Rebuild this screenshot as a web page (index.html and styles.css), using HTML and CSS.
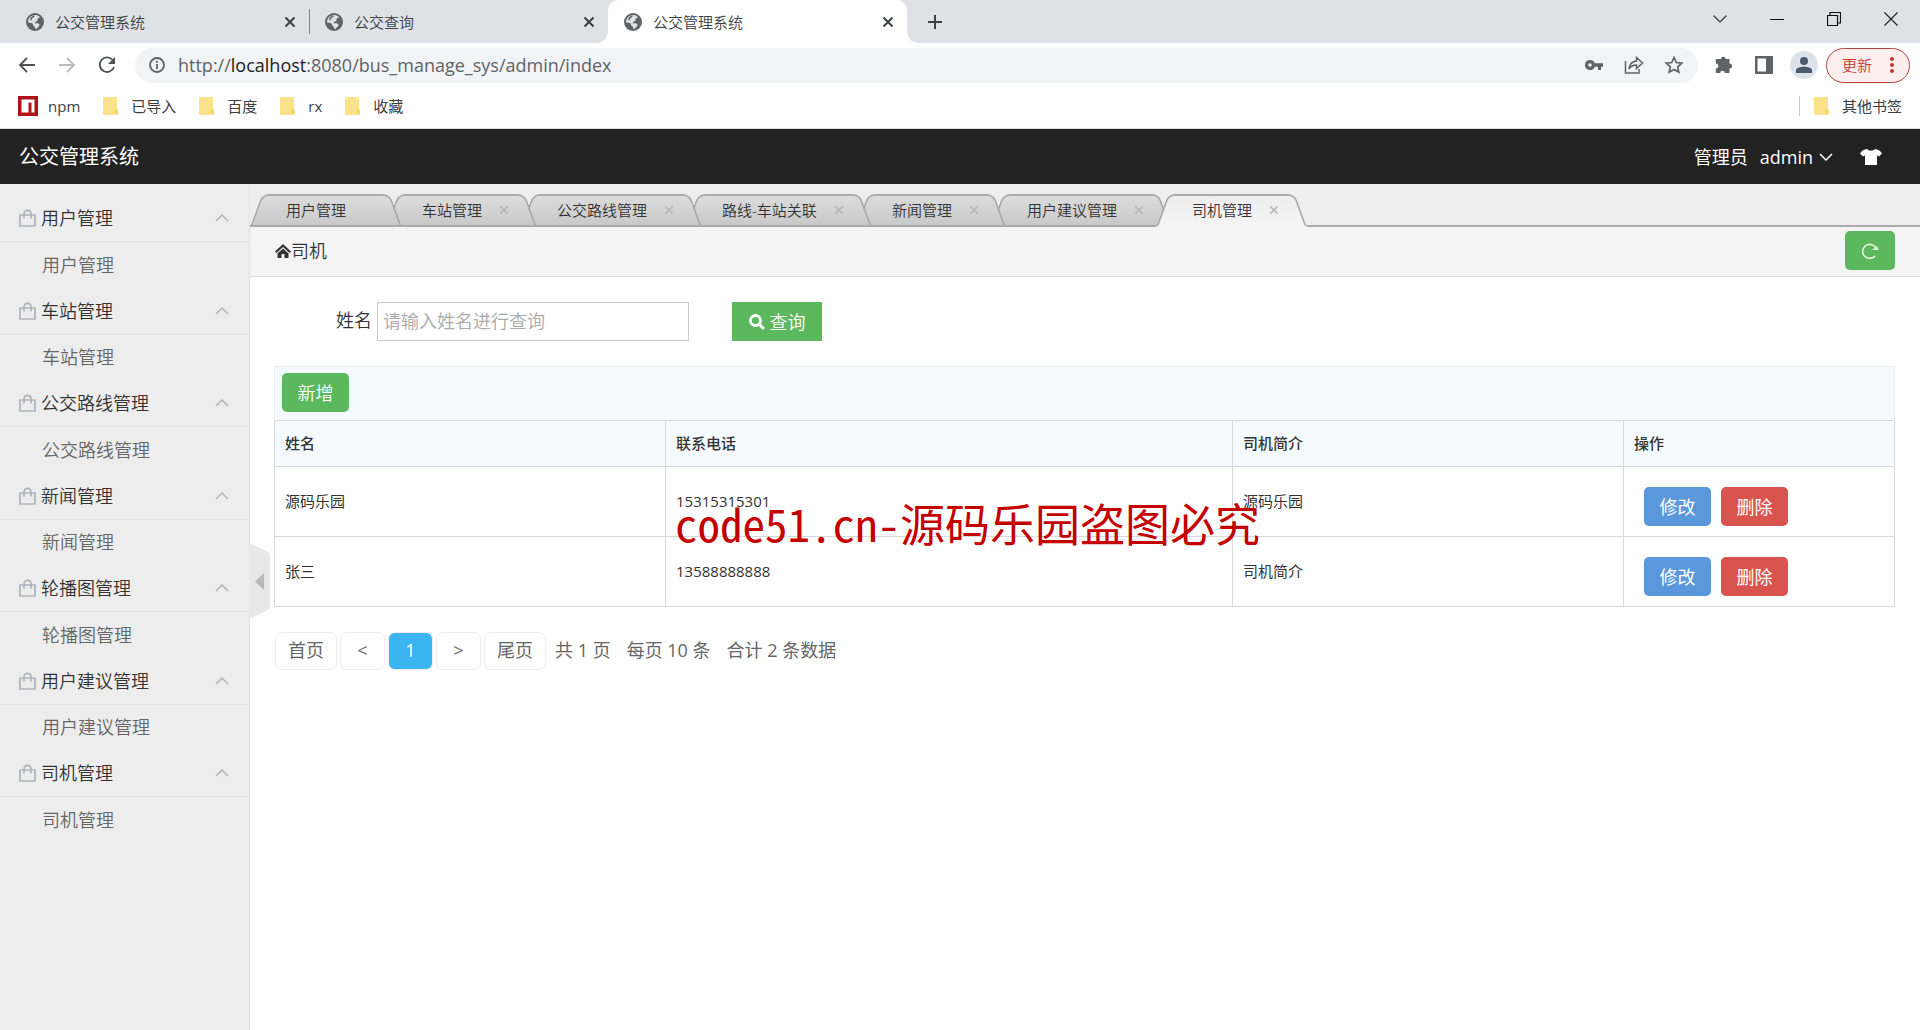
FILE: index.html
```html
<!DOCTYPE html>
<html lang="zh-CN">
<head>
<meta charset="utf-8">
<meta name="viewport" content="width=device-width, initial-scale=1">
<title>公交管理系统</title>
<link rel="stylesheet" href="styles.css">
</head>
<body>
<svg class="defs" aria-hidden="true">
  <symbol id="globe" viewBox="0 0 20 20"><circle cx="10" cy="10" r="9" fill="#5f6368"/><path d="M10.500 3c2 .2 3.500 1 4.500 2.300-.8.900-1.800.7-2.300 1.400-.4 1 .2 2-1 2.600-1 .4-1.600.2-1.900 1.200-.2.700.7.900 1.500.8 1.500-.2 3 .3 3.200 1.700.1 1.500-1.400 1.600-1.900 2.600-.3.700-.5 1.200-1.600 1.400-1.200-.1-.9-1.800-1.500-2.500-.7-.8-1.600-.9-1.600-2 0-.8-.5-1.200-1.300-1.400L3 10.400C2.900 6.500 6 3 10.500 3z" fill="#dfe2e7"/><path d="M9 3.500c-.3 1.500-1.700 1.500-2.400 2.400-.6.800-.2 1.700-1.100 2.300" fill="none" stroke="#5f6368" stroke-width="1.600"/></symbol>
  <symbol id="cross" viewBox="0 0 12 12"><path d="M1.500 1.500l9 9M10.500 1.500l-9 9" fill="none" stroke="currentColor" stroke-width="2"/></symbol>
  <symbol id="folder" viewBox="0 0 16 20"><path d="M1 1h14v13l1 1v4H1z" fill="#fbe38b"/><path d="M13 13.500h2v3.500h-2z" fill="#fbe38b" stroke="#efc94c" stroke-width=".8"/></symbol>
  <symbol id="bag" viewBox="0 0 17 18"><path d="M1 6h15v11H1zM5 9.500V5.500C5 0 12 0 12 5.500v4" fill="none" stroke="#aeb2b9" stroke-width="1.700"/></symbol>
  <symbol id="chevron-up" viewBox="0 0 14 8"><path d="M1 7l6-6 6 6" fill="none" stroke="#b4b4b4" stroke-width="1.500"/></symbol>
  <symbol id="chevron-down" viewBox="0 0 14 8"><path d="M1 1l6 6 6-6" fill="none" stroke="currentColor" stroke-width="1.500"/></symbol>
</svg>

<header class="browser">
  <div class="tab-strip">
    <div class="browser-tab">
      <svg class="favicon"><use href="#globe"/></svg><span>公交管理系统</span>
      <button class="tab-close" aria-label="关闭"><svg><use href="#cross"/></svg></button>
    </div>
    <div class="browser-tab divided">
      <svg class="favicon"><use href="#globe"/></svg><span>公交查询</span>
      <button class="tab-close" aria-label="关闭"><svg><use href="#cross"/></svg></button>
    </div>
    <div class="browser-tab current">
      <svg class="favicon"><use href="#globe"/></svg><span>公交管理系统</span>
      <button class="tab-close" aria-label="关闭"><svg><use href="#cross"/></svg></button>
    </div>
    <button class="new-tab" aria-label="新标签页"><svg width="16" height="16" viewBox="0 0 16 16"><path d="M8 1v14M1 8h14" stroke="#3c4043" stroke-width="2"/></svg></button>
    <div class="window-controls">
      <button aria-label="搜索标签页"><svg width="14" height="8" viewBox="0 0 14 8"><path d="M.5.5L7 7 13.500.5" fill="none" stroke="#333" stroke-width="1.200"/></svg></button>
      <button aria-label="最小化"><svg width="14" height="14" viewBox="0 0 14 14"><path d="M0 7.500h14" stroke="#111"/></svg></button>
      <button aria-label="还原"><svg width="14" height="14" viewBox="0 0 14 14"><path d="M.5 3.500h10v10H.5zM3 3V.5h10.500V11H11" fill="none" stroke="#111" stroke-width="1.200"/></svg></button>
      <button aria-label="关闭窗口"><svg width="14" height="14" viewBox="0 0 14 14"><path d="M.5.5l13 13M13.500.5l-13 13" stroke="#222" stroke-width="1.200"/></svg></button>
    </div>
  </div>

  <div class="toolbar">
    <button class="nav-button" aria-label="后退"><svg width="18" height="18" viewBox="0 0 18 18"><path d="M17 9H2M9 2L2 9l7 7" fill="none" stroke="#4e5256" stroke-width="1.800"/></svg></button>
    <button class="nav-button" aria-label="前进"><svg width="18" height="18" viewBox="0 0 18 18"><path d="M1 9h15M9 2l7 7-7 7" fill="none" stroke="#b9bbbe" stroke-width="1.800"/></svg></button>
    <button class="nav-button" aria-label="重新加载"><svg width="18" height="18" viewBox="0 0 18 18"><path d="M14.700 4A7.300 7.300 0 1 0 16 11" fill="none" stroke="#4e5256" stroke-width="1.800"/><path d="M17 1v7h-7z" fill="#4e5256"/></svg></button>
    <div class="omnibox">
      <svg width="18" height="18" viewBox="0 0 18 18"><circle cx="9" cy="9" r="7" fill="none" stroke="#5f6368" stroke-width="1.800"/><path d="M9 8v5M9 4.800v1.900" stroke="#5f6368" stroke-width="1.800"/></svg>
      <div class="url" role="textbox" contenteditable="true" spellcheck="false" aria-label="地址栏">http://<b>localhost</b>:8080/bus_manage_sys/admin/index</div>
      <button class="omni-button" aria-label="密码"><svg width="18" height="12" viewBox="0 0 18 12"><path d="M5 1a5 5 0 1 0 4.700 6.700H13V11h3V7.700h2V4.300H9.700A5 5 0 0 0 5 1zm0 3.200a1.800 1.800 0 1 1 0 3.600 1.800 1.800 0 0 1 0-3.600z" fill="#5f6368"/></svg></button>
      <button class="omni-button" aria-label="分享"><svg width="20" height="18" viewBox="0 0 20 18"><path d="M1.500 5v12H15v-4M5 13c.5-5 3-7.500 7.500-8V1.500L18.500 7l-6 5.500V9C9 9 7 10 5 13z" fill="none" stroke="#5f6368" stroke-width="1.500"/></svg></button>
      <button class="omni-button" aria-label="添加书签"><svg width="20" height="20" viewBox="0 0 20 20"><path d="M10 2.500l2.300 5 5.500.6-4.100 3.700 1.100 5.400-4.800-2.700-4.800 2.700 1.100-5.400L2.200 8.100l5.500-.6z" fill="none" stroke="#5f6368" stroke-width="1.700"/></svg></button>
    </div>
    <button class="tool-button" aria-label="扩展程序"><svg width="20" height="20" viewBox="0 0 20 20"><path d="M7 4a2.300 2.300 0 0 1 4.600 0h3.900v4.500a2.500 2.500 0 0 1 0 5V18h-4.700a2.300 2.300 0 0 0-4.600 0H1.800v-4.400a2.500 2.500 0 0 0 0-5V4z" fill="#5f6368"/></svg></button>
    <button class="tool-button" aria-label="侧边栏"><svg width="18" height="18" viewBox="0 0 18 18"><path d="M0 0h18v18H0zM2.500 2.500v13H11v-13z" fill="#5f6368" fill-rule="evenodd"/></svg></button>
    <button class="avatar" aria-label="个人资料"><svg width="16" height="16" viewBox="0 0 16 16"><circle cx="8" cy="4" r="4" fill="#4c5a70"/><path d="M0 16v-2.500C0 8.500 16 8.500 16 13.500V16z" fill="#4c5a70"/></svg></button>
    <button class="update">更新<svg width="4" height="16" viewBox="0 0 4 16"><g fill="#c5352d"><circle cx="2" cy="2" r="2"/><circle cx="2" cy="8" r="2"/><circle cx="2" cy="14" r="2"/></g></svg></button>
  </div>

  <nav class="bookmarks" aria-label="书签">
    <a href="#" class="npm"><svg width="20" height="20" viewBox="0 0 20 20"><path d="M0 0h20v20H0z" fill="#b01217"/><path d="M3.500 3.500h13v13h-3v-10h-3v10h-7z" fill="#fff"/></svg>npm</a>
    <a href="#"><svg class="folder"><use href="#folder"/></svg>已导入</a>
    <a href="#"><svg class="folder"><use href="#folder"/></svg>百度</a>
    <a href="#"><svg class="folder"><use href="#folder"/></svg>rx</a>
    <a href="#"><svg class="folder"><use href="#folder"/></svg>收藏</a>
    <a href="#" class="other"><svg class="folder"><use href="#folder"/></svg>其他书签</a>
  </nav>
</header>

<div class="app-header">
  <h1>公交管理系统</h1>
  <button class="account"><span>管理员</span><span>admin</span><svg width="14" height="8"><use href="#chevron-down"/></svg></button>
  <button class="skin" aria-label="换肤"><svg width="22" height="16" viewBox="0 0 22 16"><path d="M7 0c1.500 2.200 6.500 2.200 8 0 3 .3 5 1.500 7 4.500L19 7.500 17 6.300V16H5V6.300L3 7.500 0 4.500C2 1.500 4 .3 7 0z" fill="#fff"/></svg></button>
</div>

<div class="workspace">
  <nav class="sidebar" aria-label="菜单">
    <ul>
      <li><button><svg class="bag"><use href="#bag"/></svg>用户管理<svg class="arrow"><use href="#chevron-up"/></svg></button><a href="#">用户管理</a></li>
      <li><button><svg class="bag"><use href="#bag"/></svg>车站管理<svg class="arrow"><use href="#chevron-up"/></svg></button><a href="#">车站管理</a></li>
      <li><button><svg class="bag"><use href="#bag"/></svg>公交路线管理<svg class="arrow"><use href="#chevron-up"/></svg></button><a href="#">公交路线管理</a></li>
      <li><button><svg class="bag"><use href="#bag"/></svg>新闻管理<svg class="arrow"><use href="#chevron-up"/></svg></button><a href="#">新闻管理</a></li>
      <li><button><svg class="bag"><use href="#bag"/></svg>轮播图管理<svg class="arrow"><use href="#chevron-up"/></svg></button><a href="#">轮播图管理</a></li>
      <li><button><svg class="bag"><use href="#bag"/></svg>用户建议管理<svg class="arrow"><use href="#chevron-up"/></svg></button><a href="#">用户建议管理</a></li>
      <li><button><svg class="bag"><use href="#bag"/></svg>司机管理<svg class="arrow"><use href="#chevron-up"/></svg></button><a href="#">司机管理</a></li>
    </ul>
    <button class="collapse" aria-label="收起菜单"><svg width="21" height="76" viewBox="0 0 21 76"><path d="M0 0l19 9q2 1 2 3v52q0 2-2 3L0 76z" fill="#e8e8e8"/><path d="M15 30v17l-9-8.500z" fill="#b9b9b9"/></svg></button>
  </nav>

  <main>
    <div class="page-tabs">
      <div class="page-tab"><a href="#">用户管理</a></div>
      <div class="page-tab"><a href="#">车站管理</a><button aria-label="关闭"><svg><use href="#cross"/></svg></button></div>
      <div class="page-tab"><a href="#">公交路线管理</a><button aria-label="关闭"><svg><use href="#cross"/></svg></button></div>
      <div class="page-tab"><a href="#">路线-车站关联</a><button aria-label="关闭"><svg><use href="#cross"/></svg></button></div>
      <div class="page-tab"><a href="#">新闻管理</a><button aria-label="关闭"><svg><use href="#cross"/></svg></button></div>
      <div class="page-tab"><a href="#">用户建议管理</a><button aria-label="关闭"><svg><use href="#cross"/></svg></button></div>
      <div class="page-tab active"><a href="#">司机管理</a><button aria-label="关闭"><svg><use href="#cross"/></svg></button></div>
    </div>

    <div class="breadcrumb">
      <svg width="16" height="14" viewBox="0 0 16 14"><path d="M0 7.500L8 0l8 7.500-1.500 1.500L8 3 1.500 9z" fill="#333"/><path d="M2.500 9.500L8 4.500l5.500 5V14h-4v-4h-3v4h-4z" fill="#333"/></svg>
      <span>司机</span>
      <button class="refresh" aria-label="刷新"><svg width="18" height="18" viewBox="0 0 18 18"><path d="M14.500 5.500A7 7 0 1 0 14 14" fill="none" stroke="#e6f7e6" stroke-width="1.600"/><path d="M11 8h6.500l-1.500-4z" fill="#e6f7e6"/></svg></button>
    </div>

    <div class="content">
      <form class="search">
        <label for="driver-name">姓名</label>
        <input id="driver-name" type="text" placeholder="请输入姓名进行查询">
        <button type="button"><svg width="16" height="16" viewBox="0 0 16 16"><circle cx="6.500" cy="6.500" r="5" fill="none" stroke="#fff" stroke-width="2.800"/><path d="M10 10l5 5" stroke="#fff" stroke-width="3"/></svg>查询</button>
      </form>

      <section class="listing">
        <div class="actions"><button class="button green">新增</button></div>
        <table>
          <colgroup><col class="narrow"><col class="wide"><col class="narrow"><col></colgroup>
          <thead><tr><th>姓名</th><th>联系电话</th><th>司机简介</th><th>操作</th></tr></thead>
          <tbody>
            <tr><td>源码乐园</td><td>15315315301</td><td>源码乐园</td><td class="ops"><button class="button blue">修改</button><button class="button red">删除</button></td></tr>
            <tr><td>张三</td><td>13588888888</td><td>司机简介</td><td class="ops"><button class="button blue">修改</button><button class="button red">删除</button></td></tr>
          </tbody>
        </table>
        <p class="watermark">code51.cn-源码乐园盗图必究</p>
      </section>

      <nav class="pager" aria-label="分页">
        <a href="#">首页</a>
        <a href="#" class="step">&lt;</a>
        <a href="#" class="step here">1</a>
        <a href="#" class="step">&gt;</a>
        <a href="#">尾页</a>
        <span>共 1 页</span>
        <span>每页 10 条</span>
        <span>合计 2 条数据</span>
      </nav>
    </div>
  </main>
</div>
</body>
</html>
```
FILE: styles.css
```css
* { box-sizing: border-box; }

body {
  margin: 0;
  min-height: 100vh;
  display: flex;
  flex-direction: column;
  background: #fff;
  color: #333;
  font: 18px/24px "Open Sans", "Noto Sans CJK SC", sans-serif;
  font-weight: 350;
}

button, input { font: inherit; color: inherit; }
button { padding: 0; border: 0; background: none; }
a { color: inherit; text-decoration: none; }
svg { display: block; flex: none; }
.defs { position: absolute; width: 0; height: 0; }

/* Browser window */
.browser { font-size: 15px; border-bottom: 1px solid #ddd; }

.tab-strip { display: flex; height: 43px; background: #dee1e6; padding-left: 10px; }
.browser-tab {
  position: relative;
  width: 299px;
  display: flex;
  align-items: center;
  gap: 10px;
  padding: 0 11px 0 15px;
  color: #3c4043;
}
.browser-tab.divided { background: linear-gradient(#80858b, #80858b) 0 center / 1px 25px no-repeat; }
.browser-tab.current { background: #fff; border-radius: 10px 10px 0 0; }
.browser-tab.current::before, .browser-tab.current::after {
  content: "";
  position: absolute;
  bottom: 0;
  width: 10px;
  height: 10px;
}
.browser-tab.current::before { right: 100%; background: radial-gradient(circle at 0 0, transparent 9px, #fff 10px); }
.browser-tab.current::after { left: 100%; background: radial-gradient(circle at 100% 0, transparent 9px, #fff 10px); }
.favicon { width: 20px; height: 20px; }
.tab-close { width: 16px; height: 16px; margin-left: auto; display: grid; place-items: center; }
.tab-close svg { width: 12px; height: 12px; }
.new-tab { width: 56px; display: grid; place-items: center; }
.window-controls { display: flex; margin-left: auto; align-items: center; height: 37px; padding-right: 1px; }
.window-controls button { width: 57px; height: 37px; display: grid; place-items: center; color: #333; }

.toolbar { display: flex; align-items: center; height: 44px; padding: 0 10px 0 7px; }
.nav-button { width: 40px; height: 34px; display: grid; place-items: center; }
.omnibox {
  flex: 1;
  display: flex;
  align-items: center;
  height: 35px;
  margin-left: 8px;
  padding: 0 4px 0 13px;
  border-radius: 18px;
  background: #f1f3f4;
}
.url { flex: 1; margin-left: 12px; font-size: 18px; font-weight: 400; color: #5f6368; outline: 0; }
.url b { font-weight: 400; color: #202124; }
.omni-button { width: 40px; height: 34px; display: grid; place-items: center; }
.tool-button { width: 40px; height: 34px; display: grid; place-items: center; margin-left: 6px; }
.tool-button + .tool-button { margin-left: 0; }
.avatar { width: 28px; height: 28px; border-radius: 50%; background: #dce1ea; display: grid; place-items: center; margin: 0 8px 0 6px; }
.update {
  width: 84px;
  height: 35px;
  display: flex;
  align-items: center;
  justify-content: space-between;
  padding: 0 15px;
  border: 1px solid #b3453f;
  border-radius: 18px;
  background: #fceeed;
  color: #c5352d;
}

.bookmarks { display: flex; align-items: center; gap: 22px; height: 41px; padding: 0 18px 3px; color: #3c4043; font-weight: 400; }
.bookmarks a { display: flex; align-items: center; gap: 13px; }
.bookmarks .npm { gap: 10px; }
.folder { width: 16px; height: 20px; }
.bookmarks .other { margin-left: auto; padding-left: 14px; background: linear-gradient(#ccc, #ccc) 0 center / 1px 20px no-repeat; }

/* Application header */
.app-header { display: flex; align-items: center; height: 55px; padding: 0 38px 0 19px; background: #222; color: #fff; }
.app-header h1 { margin: 0 auto 0 0; font-size: 20px; font-weight: 400; }
.account { display: flex; align-items: center; gap: 12px; font-weight: 400; }
.account span + svg { margin-left: -6px; }
.skin { margin-left: 27px; }

.workspace { flex: 1; display: flex; }

/* Side menu */
.sidebar { position: relative; width: 250px; flex: none; padding-top: 11px; background: #ededed; border-right: 1px solid #e2e2e2; }
.sidebar ul { margin: 0; padding: 0; list-style: none; }
.sidebar li button {
  width: 100%;
  height: 47px;
  display: flex;
  align-items: center;
  gap: 5px;
  padding: 0 20px 0 19px;
  border-bottom: 1px solid #e2e2e2;
  text-align: left;
}
.sidebar li a { display: block; padding-left: 42px; line-height: 46px; color: #666; }
.sidebar li:nth-child(even) a { line-height: 45px; }
.bag { width: 17px; height: 18px; }
.arrow { width: 14px; height: 8px; margin-left: auto; }
.collapse { position: absolute; left: 100%; top: 359px; z-index: 10; }

main { flex: 1; min-width: 0; }

/* Page tabs: each side of a tab is a skewed half */
.page-tabs { display: flex; height: 43px; padding: 10px 0 0 6px; background: #eee; border-bottom: 2px solid #aaa; }
.page-tab {
  position: relative;
  display: flex;
  align-items: center;
  gap: 15px;
  height: 33px;
  margin-right: -4px;
  padding: 0 20px 1px 30px;
  font-size: 15px;
  line-height: 20px;
}
.page-tab:first-child { padding-right: 50px; }
.page-tab::before, .page-tab::after {
  content: "";
  position: absolute;
  top: 0;
  bottom: 0;
  background: linear-gradient(#dcdcdc, #c9c9c9);
  border: 2px solid #aaa;
}
.page-tab::before { left: 0; right: 50%; border-right: 0; border-radius: 7px 0 0 0; transform: skewX(-20deg); }
.page-tab::after { right: 0; left: 40%; border-left: 0; border-radius: 0 7px 0 0; transform: skewX(20deg); }
.page-tab.active::before, .page-tab.active::after { background: linear-gradient(#eee, #f4f4f4); border-bottom-color: #f4f4f4; }
.page-tab a, .page-tab button { position: relative; z-index: 1; }
.page-tab button { color: #b5b5b5; padding: 2px; }
.page-tab button svg { width: 10px; height: 10px; }
.page-tab:nth-child(1) { z-index: 6; }
.page-tab:nth-child(2) { z-index: 5; }
.page-tab:nth-child(3) { z-index: 4; }
.page-tab:nth-child(4) { z-index: 3; }
.page-tab:nth-child(5) { z-index: 2; }
.page-tab:nth-child(6) { z-index: 1; }
.page-tab.active { z-index: 7; }

.breadcrumb { display: flex; align-items: center; height: 50px; padding: 0 25px 2px; background: #f4f4f4; border-bottom: 1px solid #ddd; }
.refresh { width: 50px; height: 39px; margin-left: auto; border-radius: 5px; background: #5cb85c; display: grid; place-items: center; }

.content { padding: 25px 25px 25px 24px; }

.search { display: flex; align-items: center; margin: 0 0 25px 62px; }
.search label { margin-right: 5px; padding-bottom: 3px; }
.search input { width: 312px; height: 39px; padding: 0 5px 1px; border: 1px solid #ccc; outline: 0; }
.search input::placeholder { color: #aaa; opacity: 1; }
.search button { display: flex; align-items: center; justify-content: center; gap: 5px; width: 90px; height: 39px; margin-left: 43px; background: #5cb85c; color: #fff; }

.button { width: 67px; height: 39px; border-radius: 5px; color: #fff; }
.green { background: #5cb85c; }
.blue { background: #5a98db; }
.red { background: #d9534f; }

.listing { position: relative; }
.actions { height: 54px; padding: 6px 7px; background: #f5fafe; border: 1px solid #eee; border-bottom: 0; }
table { width: 100%; table-layout: fixed; border-collapse: collapse; font-size: 15px; }
.narrow { width: 391px; }
.wide { width: 567px; }
th, td { border: 1px solid #d8d8d8; padding: 0 10px 2px; text-align: left; }
th { height: 46px; background: #f5fafe; font-weight: 500; }
td { height: 70px; font-weight: 400; }
td.ops { padding: 10px 20px 0; font-size: 18px; }
.ops .button + .button { margin-left: 10px; }
.watermark {
  position: absolute;
  left: 401px;
  top: 127px;
  margin: 0;
  color: #c40000;
  font: 400 45px/60px "Noto Sans Mono CJK SC", "Noto Sans CJK SC", sans-serif;
  white-space: nowrap;
}

.pager { display: flex; align-items: center; gap: 3px; margin-top: 25px; padding-left: 1px; color: #666; font-weight: 400; }
.pager a { height: 38px; padding: 0 12px; border: 1px solid #eee; border-radius: 7px; line-height: 34px; text-align: center; }
.pager .step { width: 45px; padding: 0; }
.pager .here { background: #3bb4f2; color: #fff; }
.pager span { margin: 0 7px 0 6px; padding-bottom: 2px; }
```
